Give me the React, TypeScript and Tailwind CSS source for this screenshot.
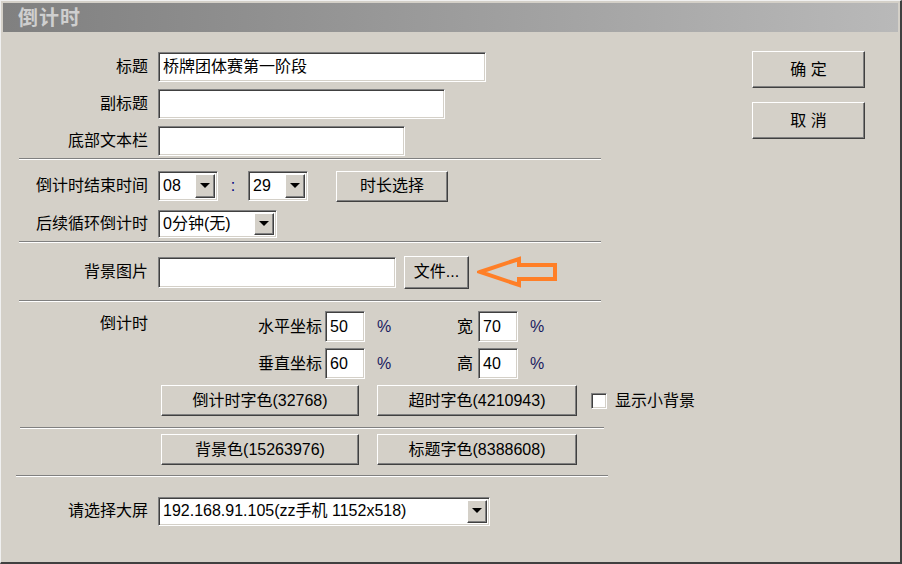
import React from "react";

const sunken =
  "bg-white border border-t-[#808080] border-l-[#808080] border-r-white border-b-white shadow-[inset_1px_1px_0_#404040,inset_-1px_-1px_0_#d4d0c8]";
const raised =
  "bg-[#d4d0c8] border border-t-white border-l-white border-r-[#404040] border-b-[#404040] shadow-[inset_-1px_-1px_0_#808080]";

const Field = ({ w, h = 30, value = "" }: { w: number; h?: number; value?: string }) => (
  <div
    className={`${sunken} shrink-0 flex items-center pl-[4px] text-[16px] text-black whitespace-nowrap`}
    style={{ width: w, height: h }}
  >
    {value}
  </div>
);

const Select = ({ w, h = 30, value }: { w: number; h?: number; value: string }) => (
  <div className={`${sunken} shrink-0 flex items-stretch p-[2px]`} style={{ width: w, height: h }}>
    <div className="flex-1 flex items-center pl-[2px] text-[16px] text-black whitespace-nowrap">{value}</div>
    <div className={`${raised} w-[20px] shrink-0 flex items-center justify-center`}>
      <svg width="10" height="6" viewBox="0 0 10 6">
        <polygon points="0,0 10,0 5,5" fill="#000" />
      </svg>
    </div>
  </div>
);

const Button = ({ w, h = 31, children }: { w: number; h?: number; children: React.ReactNode }) => (
  <div
    className={`${raised} shrink-0 flex items-center justify-center text-[16px] text-black whitespace-nowrap`}
    style={{ width: w, height: h }}
  >
    {children}
  </div>
);

const Label = ({ w = 145, children }: { w?: number; children?: React.ReactNode }) => (
  <div className="text-[16px] text-right text-black shrink-0 whitespace-nowrap" style={{ width: w }}>
    {children}
  </div>
);

const Sep = ({ ml, w, mt }: { ml: number; w: number; mt: number }) => (
  <div
    className="h-[2px] shrink-0 border-t border-t-[#808080] border-b border-b-white"
    style={{ marginLeft: ml, width: w, marginTop: mt }}
  />
);

export default function App() {
  return (
    <div className="w-[902px] h-[564px] bg-[#d4d0c8] border-t border-l border-t-[#f0f0f0] border-l-[#f0f0f0] border-r-2 border-b-2 border-r-[#404040] border-b-[#404040] p-[2px] flex flex-col font-['Liberation_Sans','Noto_Sans_CJK_SC',sans-serif] overflow-hidden">
      {/* title bar */}
      <div className="h-[29px] shrink-0 bg-gradient-to-r from-[#808080] to-[#b9b9b9] flex items-center pl-[15px]">
        <span className="text-[20px] font-bold text-[#cfcfcf] tracking-[1px]">倒计时</span>
      </div>

      <div className="flex">
        {/* form */}
        <div className="w-[610px] shrink-0 flex flex-col">
          <div className="flex items-center gap-[10px] mt-[20px] h-[30px]">
            <Label>标题</Label>
            <Field w={328} value="桥牌团体赛第一阶段" />
          </div>
          <div className="flex items-center gap-[10px] mt-[7px] h-[30px]">
            <Label>副标题</Label>
            <Field w={287} />
          </div>
          <div className="flex items-center gap-[10px] mt-[7px] h-[30px]">
            <Label>底部文本栏</Label>
            <Field w={247} />
          </div>
          <Sep ml={16} w={582} mt={2} />

          <div className="flex items-center mt-[11px] h-[30px]">
            <Label>倒计时结束时间</Label>
            <div className="ml-[10px]">
              <Select w={60} value="08" />
            </div>
            <div className="w-[30px] shrink-0 text-center text-[16px] text-[#00007f]">:</div>
            <Select w={60} value="29" />
            <div className="ml-[28px]">
              <Button w={112}>时长选择</Button>
            </div>
          </div>
          <div className="flex items-center mt-[9px] h-[28px]">
            <Label>后续循环倒计时</Label>
            <div className="ml-[10px]">
              <Select w={119} h={28} value="0分钟(无)" />
            </div>
          </div>
          <Sep ml={16} w={582} mt={3} />

          <div className="flex items-center mt-[13px] h-[32px]">
            <Label>背景图片</Label>
            <div className="ml-[10px]">
              <Field w={238} h={31} />
            </div>
            <div className="ml-[8px]">
              <Button w={65} h={33}>
                文件...
              </Button>
            </div>
            <svg className="ml-[8px] shrink-0" width="82" height="32" viewBox="0 0 82 32">
              <polygon
                points="3,16 42,3 42,9 78,9 78,23 42,23 42,29"
                fill="none"
                stroke="#ff7f27"
                strokeWidth="4"
                strokeLinejoin="miter"
              />
            </svg>
          </div>
          <Sep ml={16} w={582} mt={12} />

          <div className="flex mt-[9px] h-[31px]">
            <div className="w-[145px] shrink-0 text-right text-[16px] text-black pt-[1px]">倒计时</div>
            <div className="flex items-center">
              <Label w={174}>水平坐标</Label>
              <div className="ml-[3px]">
                <Field w={40} h={31} value="50" />
              </div>
              <div className="ml-[12px] w-[20px] shrink-0 text-[16px] text-[#1a1a60]">%</div>
              <Label w={76}>宽</Label>
              <div className="ml-[5px]">
                <Field w={40} h={31} value="70" />
              </div>
              <div className="ml-[12px] shrink-0 text-[16px] text-[#1a1a60]">%</div>
            </div>
          </div>
          <div className="flex mt-[6px] h-[31px]">
            <div className="w-[145px] shrink-0" />
            <div className="flex items-center">
              <Label w={174}>垂直坐标</Label>
              <div className="ml-[3px]">
                <Field w={40} h={31} value="60" />
              </div>
              <div className="ml-[12px] w-[20px] shrink-0 text-[16px] text-[#1a1a60]">%</div>
              <Label w={76}>高</Label>
              <div className="ml-[5px]">
                <Field w={40} h={31} value="40" />
              </div>
              <div className="ml-[12px] shrink-0 text-[16px] text-[#1a1a60]">%</div>
            </div>
          </div>
          <div className="flex items-center mt-[6px] h-[31px] pl-[158px]">
            <Button w={198}>倒计时字色(32768)</Button>
            <div className="ml-[18px] shrink-0">
              <Button w={200}>超时字色(4210943)</Button>
            </div>
            <div className={`${sunken} shrink-0 ml-[14px] w-[16px] h-[16px]`} />
            <div className="ml-[8px] shrink-0 whitespace-nowrap text-[16px] text-black">显示小背景</div>
          </div>
          <Sep ml={17} w={584} mt={11} />

          <div className="flex items-center mt-[5px] h-[31px] pl-[158px]">
            <Button w={198}>背景色(15263976)</Button>
            <div className="ml-[18px] shrink-0">
              <Button w={200}>标题字色(8388608)</Button>
            </div>
          </div>
          <Sep ml={13} w={592} mt={10} />

          <div className="flex items-center mt-[20px] h-[28px]">
            <Label>请选择大屏</Label>
            <div className="ml-[10px]">
              <Select w={332} h={29} value="192.168.91.105(zz手机 1152x518)" />
            </div>
          </div>
        </div>

        {/* dialog buttons */}
        <div className="flex flex-col ml-[139px] mt-[19px] gap-[14px]">
          <Button w={113} h={37}>
            确&nbsp;定
          </Button>
          <Button w={113} h={37}>
            取&nbsp;消
          </Button>
        </div>
      </div>
    </div>
  );
}
